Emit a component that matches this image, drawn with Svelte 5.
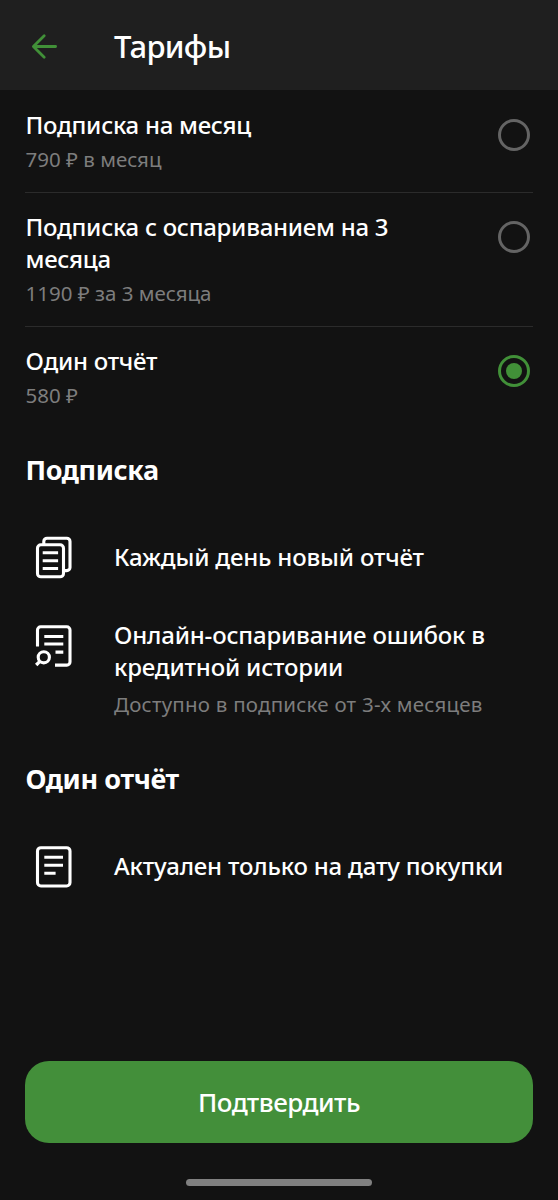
<script>
  const plans = [
    { id: 'month', title: 'Подписка на месяц', price: '790 ₽ в месяц' },
    { id: 'dispute', title: 'Подписка с оспариванием на 3 месяца', price: '1190 ₽ за 3 месяца' },
    { id: 'single', title: 'Один отчёт', price: '580 ₽' }
  ];

  const sections = [
    {
      title: 'Подписка',
      features: [
        { icon: 'copies', text: 'Каждый день новый отчёт' },
        {
          icon: 'search',
          text: 'Онлайн-оспаривание ошибок в кредитной истории',
          note: 'Доступно в подписке от 3-х месяцев'
        }
      ]
    },
    {
      title: 'Один отчёт',
      features: [{ icon: 'page', text: 'Актуален только на дату покупки' }]
    }
  ];

  let selected = $state('single');
</script>

<div class="screen">
  <header>
    <button class="back" aria-label="Назад">
      <svg width="28" height="28" viewBox="0 0 28 28" fill="none" stroke="#419038" stroke-width="2.8" stroke-linecap="round" stroke-linejoin="round">
        <path d="M25.6 14.5H3.6M14.2 3.7L3.4 14.5l10.8 10.8" />
      </svg>
    </button>
    <h1>Тарифы</h1>
  </header>

  <div class="plans" role="radiogroup">
    {#each plans as plan (plan.id)}
      <button class="plan" role="radio" aria-checked={selected === plan.id} onclick={() => (selected = plan.id)}>
        <span class="info">
          <span class="title">{plan.title}</span>
          <span class="price">{plan.price}</span>
        </span>
        <span class="radio" class:on={selected === plan.id}></span>
      </button>
    {/each}
  </div>

  {#each sections as section}
    <section>
      <h2>{section.title}</h2>
      <ul>
        {#each section.features as feature}
          <li class:tall={feature.note}>
            <svg class="icon" width="40" height="44" viewBox="0 0 40 44" fill="none" stroke="#fff" stroke-width="3.1">
              {#if feature.icon === 'copies'}
                <rect x="3.5" y="8.8" width="26" height="32" rx="3.4" />
                <path d="M9.8 8V5.4a3.2 3.2 0 0 1 3.2-3.2h19.8a3.2 3.2 0 0 1 3.200 3.200v26a3.200 3.200 0 0 1-3.200 3.200H30.500" />
                <path d="M8.700 16.800h15.400M8.700 24.700h15.400M8.700 32.500h15.400" />
              {:else if feature.icon === 'search'}
                <path d="M3.500 22.500V6a3.200 3.200 0 0 1 3.200-3.200h26.100A3.200 3.200 0 0 1 36 6v31.900a3.200 3.200 0 0 1-3.200 3.200H21" />
                <path d="M10.300 12.500h19M10.300 20h19M21.500 28.100h7.800" />
                <circle cx="9.800" cy="33.300" r="5.600" />
                <path d="M5.900 37.300l-3.700 3.700" stroke-width="3.300" />
              {:else}
                <rect x="3.500" y="2.700" width="32.500" height="38.300" rx="3.400" />
                <path d="M10.300 12.200h18.700M10.300 20.200h18.700M10.300 28.200h11.300" />
              {/if}
            </svg>
            <div>
              <p>{feature.text}</p>
              {#if feature.note}<small>{feature.note}</small>{/if}
            </div>
          </li>
        {/each}
      </ul>
    </section>
  {/each}

  <footer>
    <button class="confirm">Подтвердить</button>
    <div class="handle"></div>
  </footer>
</div>

<style>
  :global(body) {
    background: #121212;
  }

  .screen {
    box-sizing: border-box;
    height: 1200px;
    display: flex;
    flex-direction: column;
    background: #121212;
    color: #fff;
    font-family: 'Noto Sans', sans-serif;
  }

  button {
    border: 0;
    padding: 0;
    margin: 0;
    background: none;
    color: inherit;
    font-family: inherit;
  }

  h1, h2, ul, p {
    margin: 0;
    padding: 0;
  }

  header {
    flex: none;
    box-sizing: border-box;
    height: 90px;
    padding: 1px 30px 0;
    display: flex;
    align-items: center;
    gap: 56px;
    background: #1f1f1f;
  }

  .back {
    width: 28px;
    height: 28px;
  }

  .back svg {
    display: block;
  }

  h1 {
    font-size: 31px;
    font-weight: 500;
    line-height: 44px;
    letter-spacing: -0.7px;
  }

  .plans {
    padding: 1px 25px 0;
  }

  .plan {
    width: 100%;
    display: flex;
    justify-content: space-between;
    align-items: flex-start;
    padding: 18px 0 19px;
    text-align: left;
  }

  .plan + .plan {
    border-top: 1px solid #2b2b2b;
  }

  .info {
    display: flex;
    flex-direction: column;
    gap: 4px;
    width: 400px;
    padding-left: 0.5px;
  }

  .title {
    font-size: 24px;
    font-weight: 500;
    line-height: 32px;
    letter-spacing: -0.26px;
  }

  .price, small {
    display: block;
    font-size: 20.5px;
    line-height: 28px;
    color: #7d7d7d;
  }

  .radio {
    box-sizing: border-box;
    flex: none;
    width: 32px;
    height: 32px;
    margin: 9.5px 3.5px 0 0;
    border: 3px solid #646464;
    border-radius: 50%;
    display: flex;
    align-items: center;
    justify-content: center;
  }

  .radio.on {
    border-color: #419038;
  }

  .radio.on::after {
    content: '';
    width: 16px;
    height: 16px;
    border-radius: 50%;
    background: #419038;
  }

  section {
    padding: 0 24px 0 25.5px;
  }

  .plans + section {
    margin-top: 24px;
  }

  section + section {
    margin-top: 43px;
  }

  h2 {
    font-size: 27px;
    font-weight: 700;
    line-height: 36px;
    letter-spacing: -0.4px;
  }

  ul {
    list-style: none;
    padding-top: 48px;
    display: flex;
    flex-direction: column;
    gap: 39px;
  }

  li {
    display: flex;
    align-items: flex-start;
    gap: 40px;
    padding-left: 8.5px;
  }

  li div {
    padding-top: 5px;
    margin-right: -5px;
  }

  .icon {
    flex: none;
    display: block;
  }

  li.tall div {
    padding-top: 0;
  }

  li.tall .icon {
    margin-top: 4.5px;
  }

  li p {
    font-size: 24px;
    font-weight: 500;
    line-height: 32px;
    letter-spacing: -0.18px;
  }

  small {
    padding-top: 7px;
    letter-spacing: 0.23px;
  }

  footer {
    margin-top: auto;
    padding: 0 25px 14px;
    display: flex;
    flex-direction: column;
    align-items: center;
    gap: 36px;
  }

  .confirm {
    width: 100%;
    height: 82px;
    border-radius: 24px;
    background: #438f3a;
    font-size: 26px;
    font-weight: 500;
    letter-spacing: -0.5px;
  }

  .handle {
    width: 186px;
    height: 7px;
    border-radius: 4px;
    background: #808080;
  }
</style>
